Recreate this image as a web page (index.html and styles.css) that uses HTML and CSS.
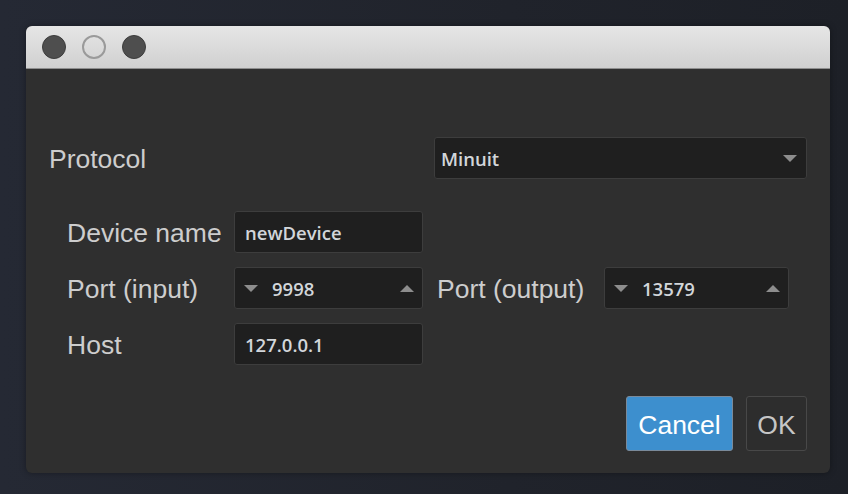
FILE: index.html
```html
<!DOCTYPE html>
<html>
<head>
<meta charset="utf-8">
<link rel="stylesheet" href="styles.css">
</head>
<body>
<div class="window">
  <div class="titlebar">
    <span class="light filled"></span>
    <span class="light hollow"></span>
    <span class="light filled"></span>
  </div>
  <div class="content">
    <div class="protocol-row">
      <span class="label">Protocol</span>
      <div class="field combo">
        <span class="value">Minuit</span>
        <span class="tri down"></span>
      </div>
    </div>
    <div class="form">
      <div class="row">
        <span class="label col">Device name</span>
        <div class="field input"><span class="value">newDevice</span></div>
      </div>
      <div class="row">
        <span class="label col">Port (input)</span>
        <div class="field spin">
          <span class="tri down"></span>
          <span class="value num">9998</span>
          <span class="tri up"></span>
        </div>
        <span class="label col out">Port (output)</span>
        <div class="field spin narrow">
          <span class="tri down"></span>
          <span class="value num">13579</span>
          <span class="tri up"></span>
        </div>
      </div>
      <div class="row">
        <span class="label col">Host</span>
        <div class="field input"><span class="value">127.0.0.1</span></div>
      </div>
    </div>
    <div class="buttons">
      <button class="btn primary">Cancel</button>
      <button class="btn">OK</button>
    </div>
  </div>
</div>
</body>
</html>
```
FILE: styles.css
```css
html, body {
  margin: 0;
  height: 100%;
}
body {
  background: linear-gradient(90deg, #252934 0%, #20232b 60%, #1d2027 100%);
  padding: 26px;
  box-sizing: border-box;
  font-family: "Liberation Sans", Arial, sans-serif;
}
.window {
  width: 804px;
  height: 447px;
  border-radius: 6px;
  background: #2f2f2f;
  display: flex;
  flex-direction: column;
  overflow: hidden;
  box-shadow: 0 0 6px rgba(0,0,0,0.35);
}
.titlebar {
  height: 42px;
  flex: none;
  background: linear-gradient(#e6e6e6, #d0d0d0);
  border-bottom: 1px solid #8e8e8e;
  display: flex;
  align-items: center;
  padding-left: 16px;
  gap: 16px;
}
.light {
  width: 24px;
  height: 24px;
  border-radius: 50%;
  box-sizing: border-box;
}
.light.filled {
  background: #4e4e4e;
  border: 1px solid #3c3c3c;
}
.light.hollow {
  border: 2px solid #9a9a9a;
}
.content {
  flex: 1;
  padding: 0 23px;
  display: flex;
  flex-direction: column;
}
.label {
  font-size: 26.5px;
  color: #cdcdcd;
  line-height: 42px;
  white-space: nowrap;
  padding-top: 2px;
}
.protocol-row {
  margin-top: 68px;
  height: 42px;
  display: flex;
  justify-content: space-between;
  align-items: center;
}
.field {
  height: 42px;
  box-sizing: border-box;
  background: #1f1f1f;
  border: 1px solid #3d3d3d;
  border-radius: 3px;
  display: flex;
  align-items: center;
  font-family: "Open Sans", "Noto Sans", sans-serif;
  font-size: 18.5px;
  font-weight: 600;
  color: #d2d6da;
}
.combo {
  width: 373px;
  padding: 0 9px 0 6px;
  justify-content: space-between;
}
.form {
  margin-top: 32px;
  padding-left: 18px;
  display: flex;
  flex-direction: column;
  gap: 14px;
}
.row {
  display: flex;
  align-items: center;
  height: 42px;
}
.col {
  width: 167px;
}
.col.out {
  margin-left: 14px;
}
.input {
  width: 189px;
  padding-left: 10px;
}
.spin {
  width: 189px;
  padding: 0 8px 0 9px;
}
.spin.narrow {
  width: 185px;
}
.num {
  margin-left: 14px;
  flex: 1;
}
.tri {
  width: 0;
  height: 0;
  border-left: 7px solid transparent;
  border-right: 7px solid transparent;
}
.tri.down {
  border-top: 7px solid #8d8d8d;
}
.tri.up {
  border-bottom: 7px solid #8d8d8d;
}
.buttons {
  margin-top: 31px;
  display: flex;
  justify-content: flex-end;
  gap: 13px;
}
.btn {
  height: 55px;
  box-sizing: border-box;
  border-radius: 3px;
  font-family: "Liberation Sans", Arial, sans-serif;
  font-size: 26.5px;
  padding: 3px 0 0;
  background: #2d2d2d;
  border: 1px solid #484848;
  color: #c6c6c6;
  width: 61px;
}
.btn.primary {
  width: 107px;
  background: #3d8fce;
  border: 1px solid #7a8a9a;
  color: #ffffff;
}
```
